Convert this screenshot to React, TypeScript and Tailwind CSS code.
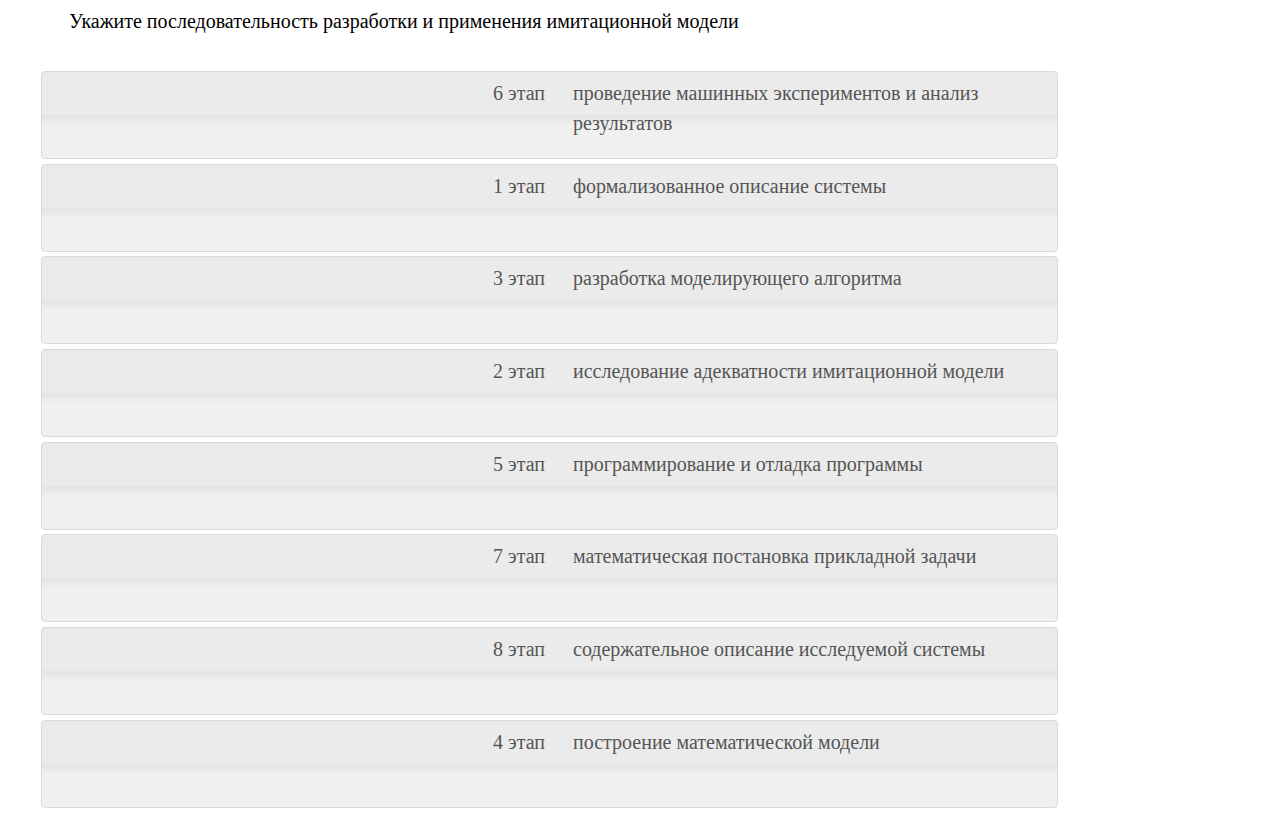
const STAGES: { stage: string; text: string }[] = [
  { stage: "6 этап", text: "проведение машинных экспериментов и анализ результатов" },
  { stage: "1 этап", text: "формализованное описание системы" },
  { stage: "3 этап", text: "разработка моделирующего алгоритма" },
  { stage: "2 этап", text: "исследование адекватности имитационной модели" },
  { stage: "5 этап", text: "программирование и отладка программы" },
  { stage: "7 этап", text: "математическая постановка прикладной задачи" },
  { stage: "8 этап", text: "содержательное описание исследуемой системы" },
  { stage: "4 этап", text: "построение математической модели" },
];

const App = () => {
  return (
    <div className="bg-white min-h-screen font-['Liberation_Serif',serif]">
      <p className="pl-[69px] pt-[9px] text-[20px] leading-[24px] text-black">
        Укажите последовательность разработки и применения имитационной модели
      </p>
      <div className="flex flex-col gap-[4.7px] ml-[41px] mt-[38px] w-[1017px]">
        {STAGES.map((item) => (
          <div
            key={item.stage}
            className="flex h-[88px] rounded-[4px] border border-[#d9d9d9] bg-[linear-gradient(to_bottom,#ebebeb_0%,#ebebeb_48%,#e4e4e4_52%,#f0f0f0_62%,#f0f0f0_100%)] pt-[6px] text-[20px] leading-[30px] text-[#555]"
          >
            <div className="w-[503px] shrink-0 text-right">{item.stage}</div>
            <div className="pl-[28px] pr-[40px]">{item.text}</div>
          </div>
        ))}
      </div>
    </div>
  );
};

export default App;
